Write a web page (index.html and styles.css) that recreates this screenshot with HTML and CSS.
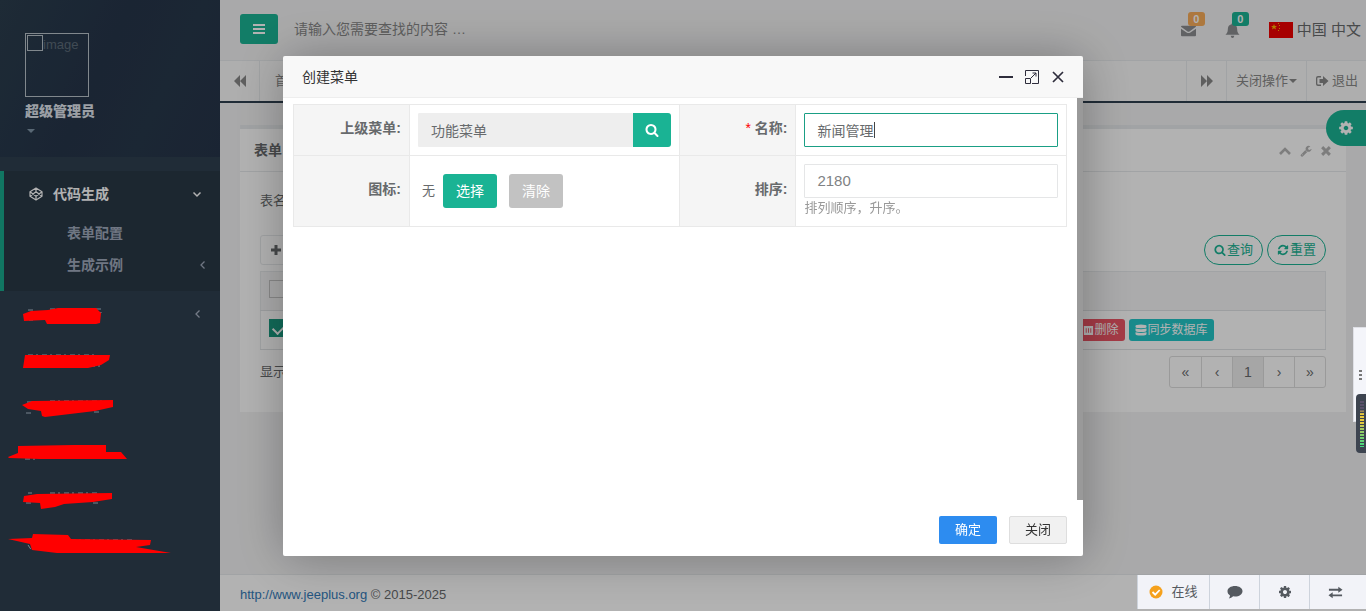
FILE: index.html
```html
<!DOCTYPE html>
<html lang="zh-CN">
<head>
<meta charset="utf-8">
<title>表单配置</title>
<link rel="stylesheet" href="styles.css">
</head>
<body>
<svg class="sprite" aria-hidden="true">
  <symbol id="search" viewBox="0 0 1792 1792"><path d="M1216 832q0-185-131.500-316.500t-316.500-131.500-316.500 131.500-131.500 316.500 131.500 316.500 316.500 131.500 316.500-131.500 131.500-316.500zm512 832q0 52-38 90t-90 38q-54 0-90-38l-343-342q-179 124-399 124-143 0-273.500-55.500t-225-150-150-225-55.500-273.500 55.500-273.500 150-225 225-150 273.500-55.500 273.500 55.500 225 150 150 225 55.500 273.500q0 220-124 399l343 343q37 37 37 90z"/></symbol>
  <symbol id="cog" viewBox="0 0 1792 1792"><path d="M1152 896q0-106-75-181t-181-75-181 75-75 181 75 181 181 75 181-75 75-181zm512-109v222q0 12-8 23t-20 13l-185 28q-19 54-39 91 35 50 107 138 10 12 10 25t-9 23q-27 37-99 108t-94 71q-12 0-26-9l-138-108q-44 23-91 38-16 136-29 186-7 28-36 28h-222q-14 0-24.500-8.500t-11.500-21.500l-28-184q-49-16-90-37l-141 107q-10 9-25 9-14 0-25-11-126-114-165-168-7-10-7-23 0-12 8-23 15-21 51-66.500t54-70.500q-27-50-41-99l-183-27q-13-2-21-12.500t-8-23.500v-222q0-12 8-23t19-13l186-28q14-46 39-92-40-57-107-138-10-12-10-24 0-10 9-23 26-36 98.500-107.500t94.500-71.500q13 0 26 10l138 107q44-23 91-38 16-136 29-186 7-28 36-28h222q14 0 24.500 8.500t11.500 21.500l28 184q49 16 90 37l142-107q9-9 24-9 13 0 25 10 129 119 165 170 7 8 7 22 0 12-8 23-15 21-51 66.500t-54 70.500q26 50 41 98l183 28q13 2 21 12.500t8 23.500z"/></symbol>
  <symbol id="refresh" viewBox="0 0 1792 1792"><path d="M1639 1056q0 5-1 7-64 268-268 434.500t-478 166.500q-146 0-282.500-55t-243.500-157l-129 129q-19 19-45 19t-45-19-19-45v-448q0-26 19-45t45-19h448q26 0 45 19t19 45-19 45l-137 137q71 66 161 102t187 36q134 0 250-65t186-179q11-17 53-117 8-23 30-23h192q13 0 22.500 9.500t9.500 22.500zm25-800v448q0 26-19 45t-45 19h-448q-26 0-45-19t-19-45 19-45l138-138q-148-137-349-137-134 0-250 65t-186 179q-11 17-53 117-8 23-30 23h-199q-13 0-22.500-9.500t-9.500-22.500v-7q65-268 270-434.500t480-166.500q146 0 284 55.500t245 156.500l130-129q19-19 45-19t45 19 19 45z"/></symbol>
  <symbol id="wrench" viewBox="0 0 1792 1792"><path d="M448 1472q0-26-19-45t-45-19-45 19-19 45 19 45 45 19 45-19 19-45zm644-420l-682 682q-37 37-90 37-52 0-91-37l-106-108q-38-36-38-90 0-53 38-91l681-681q39 98 114.500 173.500t173.500 114.500zm634-435q0 39-23 106-47 134-164.500 217.500t-258.500 83.500q-185 0-316.500-131.500t-131.500-316.500 131.500-316.500 316.500-131.500q58 0 121.500 16.500t107.500 46.500q16 11 16 28t-16 28l-293 169v224l193 107q5-3 79-48.500t135.500-81 70.500-35.500q15 0 23.500 10t8.500 25z"/></symbol>
  <symbol id="bars" viewBox="0 0 14 14"><path d="M1 2h12v2H1zM1 6h12v2H1zM1 10h12v2H1z"/></symbol>
  <symbol id="backward" viewBox="0 0 14 14"><path d="M7 1v12L1 7zM13 1v12L7 7z"/></symbol>
  <symbol id="forward" viewBox="0 0 14 14"><path d="M1 1v12l6-6zM7 1v12l6-6z"/></symbol>
  <symbol id="envelope" viewBox="0 0 16 16"><path d="M0 4q0-1 1-1h14q1 0 1 1L9 9q-1 .8-2 0zM0 6l6 4q2 1.500 4 0l6-4v7q0 1-1 1H1q-1 0-1-1z"/></symbol>
  <symbol id="bell" viewBox="0 0 16 16"><path d="M8 0q1 0 1 1.300C12 2 13 4 13 7c0 3 1 4 2.500 5.500H.5C2 11 3 10 3 7c0-3 1-5 4-5.700Q7 0 8 0zM6 13.500h4Q9.500 16 8 16T6 13.500z"/></symbol>
  <symbol id="signout" viewBox="0 0 14 14"><path d="M6 2H3Q1 2 1 4v6q0 2 2 2h3v-1.500H3q-.7 0-.7-.7V4.200q0-.7.7-.7h3zM8 2l5.500 5L8 12V9H4.500V5H8z"/></symbol>
  <symbol id="plus" viewBox="0 0 12 12"><path d="M4.500 1h3v3.500H11v3H7.500V11h-3V7.500H1v-3h3.500z"/></symbol>
  <symbol id="up" viewBox="0 0 14 14"><path d="M2 10l5-5 5 5" fill="none" stroke="currentColor" stroke-width="2.600"/></symbol>
  <symbol id="times" viewBox="0 0 14 14"><path d="M2.500 2.500l9 9M11.500 2.500l-9 9" fill="none" stroke="currentColor" stroke-width="3.400"/></symbol>
  <symbol id="left" viewBox="0 0 10 10"><path d="M6.500 1.500L3 5l3.500 3.500" fill="none" stroke="currentColor" stroke-width="1.300"/></symbol>
  <symbol id="down" viewBox="0 0 10 10"><path d="M1.500 3.500L5 7l3.500-3.500" fill="none" stroke="currentColor" stroke-width="1.500"/></symbol>
  <symbol id="codepen" viewBox="0 0 14 14"><path d="M7 1l6 3.800v4.400L7 13 1 9.200V4.800zM7 1v3.800M7 9.200V13M1 4.800l6 4.400 6-4.400M1 9.200l6-4.400 6 4.400" fill="none" stroke="currentColor" stroke-width="1.200" stroke-linejoin="round"/></symbol>
  <symbol id="trash" viewBox="0 0 12 12"><path d="M1 1h10v10H1zM3 3.500v5h1v-5zM5.500 3.500v5h1v-5zM8 3.500v5h1v-5z" fill-rule="evenodd"/></symbol>
  <symbol id="database" viewBox="0 0 12 12"><path d="M.5 2Q.5.500 6 .5T11.500 2v1Q11.500 4.200 6 4.200T.5 3zM.5 4.500q5.500 1.500 11 0v2Q11.500 8 6 8T.5 6.500zM.5 8.200q5.500 1.500 11 0V10q0 1.500-5.500 1.500T.5 10z"/></symbol>
  <symbol id="comment" viewBox="0 0 16 14"><path d="M8 1c4.200 0 7.500 2.200 7.500 5.200S12.200 11.500 8 11.500l-1.800-.2Q4.300 13 1.800 13.400q1.200-1.300 1.200-3C1.400 9.400.5 8 .5 6.200.500 3.200 3.800 1 8 1z"/></symbol>
  <symbol id="exchange" viewBox="0 0 16 14"><path d="M1 3h10V.8L15.500 4 11 7.200V5H1zM15 9H5V6.800L.5 10 5 13.200V11h10z"/></symbol>
</svg>

<div class="app">
  <nav class="sidebar">
    <div class="profile">
      <div class="avatar"><span class="broken"></span><span>image</span></div>
      <strong class="user">超级管理员</strong>
      <span class="caret"></span>
    </div>
    <div class="group">
      <a class="group-title" href="#"><svg class="icon14"><use href="#codepen"/></svg><span>代码生成</span><svg class="arrow"><use href="#down"/></svg></a>
      <a class="sub" href="#">表单配置</a>
      <a class="sub" href="#">生成示例<svg class="arrow"><use href="#left"/></svg></a>
    </div>
    <div class="masked">
      <a class="mask-row" href="#" aria-label="菜单一"><svg class="mark" viewBox="0 0 180 46"><path class="trace" d="M28 19h5M50 18h30M96 18h5v4h-5M29 29h4"/><path d="M23 23l8-3 17-1 10-2h38l5 5-1 10-4 1H47l-2-4-21 1z"/></svg><svg class="arrow"><use href="#left"/></svg></a>
      <a class="mask-row" href="#" aria-label="菜单二"><svg class="mark" viewBox="0 0 180 46"><path class="trace" d="M28 18h70M90 29h13"/><path d="M25 18h85l-1 5-8 5-13 3H23z"/></svg></a>
      <a class="mask-row" href="#" aria-label="菜单三"><svg class="mark" viewBox="0 0 180 46"><path class="trace" d="M27 19h6M50 18h53M26 30h8M94 29h8"/><path d="M22 22l10-4 81-1v7l-18 4-50 6-3-1-1-5-13-2z"/></svg></a>
      <a class="mask-row" href="#" aria-label="菜单四"><svg class="mark" viewBox="0 0 180 46"><path class="trace" d="M25 30h12M49 29h30"/><path d="M8 28l10-4V17l56-1h32v7h15l6 7H40l-31-1z"/></svg></a>
      <a class="mask-row" href="#" aria-label="菜单五"><svg class="mark" viewBox="0 0 180 46"><path class="trace" d="M28 18h4M50 18h50M26 28h5M93 28h7"/><path d="M24 21l13-2 75-1v6l-19 3-29 2-9 3-14 2-1-6-17-1z"/></svg></a>
      <a class="mask-row" href="#" aria-label="菜单六"><svg class="mark" viewBox="0 0 180 46"><path class="trace" d="M28 24l4 6M71 19h64"/><path d="M8 18l24-1 1-4 35 1 3 4 80 1-1 5-14 2 35 6H57l-25-3-2-6z"/></svg></a>
    </div>
  </nav>

  <div class="main">
    <header class="topbar">
      <button class="toggle" aria-label="切换菜单"><svg class="icon14"><use href="#bars"/></svg></button>
      <input class="finder" type="text" aria-label="查找" placeholder="请输入您需要查找的内容 …">
      <a class="notice" href="#" aria-label="邮件"><svg class="icon15"><use href="#envelope"/></svg><span class="badge amber">0</span></a>
      <a class="notice" href="#" aria-label="通知"><svg class="icon15"><use href="#bell"/></svg><span class="badge">0</span></a>
      <a class="lang" href="#"><svg class="flag" viewBox="0 0 24 16"><path fill="#f00000" d="M0 0h24v16H0z"/><path fill="#ffb000" d="M5 2l.8 2H8L6.300 5.300 7 7.500 5 6.200 3 7.500l.7-2.200L2 4h2.200zM9 1h1v1H9zM10 3h1v1h-1zM10 6h1v1h-1zM9 8h1v1H9z"/></svg>中国 中文</a>
    </header>
    <div class="tabs">
      <button class="tab-cell arrow-cell" aria-label="向左"><svg class="icon14"><use href="#backward"/></svg></button>
      <a class="home" href="#">首页</a>
      <button class="tab-cell arrow-cell" aria-label="向右"><svg class="icon14"><use href="#forward"/></svg></button>
      <button class="tab-cell close-cell">关闭操作<span class="caret"></span></button>
      <a class="tab-cell exit-cell" href="#"><svg class="icon14"><use href="#signout"/></svg>退出</a>
    </div>
    <main class="content">
      <section class="box">
        <div class="box-title"><h5>表单</h5>
          <div class="tools"><svg class="icon14"><use href="#up"/></svg><svg class="icon12"><use href="#wrench"/></svg><svg class="icon12"><use href="#times"/></svg></div>
        </div>
        <div class="box-body">
          <div class="filter">表名</div>
          <div class="toolbar">
            <button class="add" aria-label="新建"><svg class="icon12"><use href="#plus"/></svg></button>
            <div class="pills">
              <button class="pill"><svg class="icon12"><use href="#search"/></svg>查询</button>
              <button class="pill"><svg class="icon12"><use href="#refresh"/></svg>重置</button>
            </div>
          </div>
          <table class="grid">
            <thead><tr><th class="pick"><input type="checkbox" aria-label="全选"></th><th></th><th class="ops"></th></tr></thead>
            <tbody><tr><td class="pick"><input type="checkbox" checked aria-label="选择行"></td><td></td><td class="ops"><div class="op-list"><button class="op danger"><svg class="icon11"><use href="#trash"/></svg>删除</button><button class="op info"><svg class="icon12"><use href="#database"/></svg>同步数据库</button></div></td></tr></tbody>
          </table>
          <div class="pager-row"><span>显示</span>
            <div class="pager"><a href="#">«</a><a href="#">‹</a><a class="current" href="#">1</a><a href="#">›</a><a href="#">»</a></div>
          </div>
        </div>
      </section>
    </main>
    <footer class="footer"><a href="#">http://www.jeeplus.org</a> © 2015-2025</footer>
  </div>
</div>

<button class="theme" aria-label="主题设置"><svg class="icon16"><use href="#cog"/></svg></button>
<div class="shade"></div>

<div class="dialog" role="dialog" aria-labelledby="dialog-title">
  <div class="dialog-head"><span id="dialog-title">创建菜单</span>
    <div class="dialog-tools">
      <button aria-label="最小化"><svg class="icon14" viewBox="0 0 14 14"><path d="M0 7h14" stroke="#2e2d3c" stroke-width="2"/></svg></button>
      <button aria-label="最大化"><svg class="icon14" viewBox="0 0 14 14"><path d="M.5 6V.5h13v13H7M.5 8.500h5v5h-5zM6 8l5-5M7.500 3H11v3.500" fill="none" stroke="#2e2d3c"/></svg></button>
      <button aria-label="关闭"><svg class="icon14" viewBox="0 0 14 14"><path d="M2 2l10 10M12 2L2 12" stroke="#2e2d3c" stroke-width="1.700"/></svg></button>
    </div>
  </div>
  <div class="dialog-body">
    <div class="sheet">
      <table class="form">
        <tr>
          <th><label for="parent">上级菜单:</label></th>
          <td><div class="lookup"><input id="parent" class="field" type="text" value="功能菜单" readonly><button class="find" aria-label="查找上级菜单"><svg class="icon14"><use href="#search"/></svg></button></div></td>
          <th><label for="name"><span class="star">*</span> 名称:</label></th>
          <td><input id="name" class="field active" type="text" value="新闻管理"></td>
        </tr>
        <tr>
          <th>图标:</th>
          <td><div class="icon-pick"><span>无</span><button class="btn">选择</button><button class="btn plain">清除</button></div></td>
          <th><label for="sort">排序:</label></th>
          <td><input id="sort" class="field number" type="text" value="2180"><div class="help">排列顺序，升序。</div></td>
        </tr>
      </table>
    </div>
  </div>
  <div class="dialog-foot"><button class="ok">确定</button><button class="cancel">关闭</button></div>
</div>

<div class="side-tab"><i></i><i></i><i></i></div>
<div class="meter"><span></span></div>
<div class="chatbar">
  <button class="online"><svg class="icon14" viewBox="0 0 14 14"><circle cx="7" cy="7" r="6.500" fill="#f5a11c"/><path d="M3.500 7l2.700 2.700 4.500-4.700" fill="none" stroke="#fff" stroke-width="1.800"/></svg>在线</button>
  <button aria-label="消息"><svg class="icon16"><use href="#comment"/></svg></button>
  <button aria-label="设置"><svg class="icon14"><use href="#cog"/></svg></button>
  <button aria-label="切换"><svg class="icon15"><use href="#exchange"/></svg></button>
</div>
</body>
</html>
```

FILE: styles.css
```css
* { box-sizing: border-box; }
body {
  margin: 0;
  background: #2f4050;
  color: #676a6c;
  font: 13px/20px "Liberation Sans", "Noto Sans CJK SC", sans-serif;
}
a { color: inherit; text-decoration: none; }
button, input { font: inherit; color: inherit; margin: 0; }
button { border: 0; padding: 0; background: none; white-space: nowrap; }
svg { fill: currentColor; flex: none; }
.sprite { position: absolute; width: 0; height: 0; }
.icon11 { width: 11px; height: 11px; }
.icon12 { width: 12px; height: 12px; }
.icon14 { width: 14px; height: 14px; }
.icon15 { width: 15px; height: 15px; }
.icon16 { width: 16px; height: 16px; }
.caret { display: inline-block; border: 4px solid transparent; border-top-color: currentColor; border-bottom: 0; }

.app { display: flex; min-height: 100vh; }

/* sidebar */
.sidebar { width: 220px; flex: none; background: #2f4050; color: #a7b1c2; font-size: 14px; font-weight: bold; }
.profile {
  display: flex; flex-direction: column; align-items: flex-start;
  height: 157px; padding: 33px 25px 0; margin-bottom: 14px;
  background: linear-gradient(115deg, #2b3e4e, #26354a 45%, #28384b 70%, #26344a);
  color: #dfe4ed;
}
.avatar { display: flex; width: 64px; height: 64px; padding: 1px; border: 1px solid #b9c3cb; font-size: 13px; font-weight: normal; color: #5d6c79; }
.broken { width: 16px; height: 16px; border: 1px solid #b9c3cb; }
.user { margin-top: 4px; }
.profile .caret { margin-top: 8px; margin-left: 2px; color: #8095a8; }
.group { border-left: 4px solid #19aa8d; background: #293846; padding-bottom: 10px; }
.group-title, .sub { display: flex; align-items: center; padding-right: 18px; }
.group-title { height: 46px; padding-left: 25px; gap: 10px; color: #fff; }
.sub { height: 32px; padding-left: 63px; padding-right: 12px; color: #a0aabc; }
.arrow { width: 10px; height: 10px; margin-left: auto; }
.mask-row { display: flex; align-items: center; height: 46px; padding-right: 17px; }
.mark { width: 180px; height: 46px; fill: #f00; position: relative; z-index: 20; }
.trace { fill: none; stroke: #78838f; stroke-width: 1; stroke-dasharray: 5 3 2 4; }

/* main column */
.main { flex: 1; min-width: 0; display: flex; flex-direction: column; background: #f3f3f4; }
.topbar { display: flex; align-items: center; height: 61px; padding: 0 5px 2px 20px; border-bottom: 1px solid #e7eaec; }
.toggle { display: grid; place-items: center; width: 38px; height: 30px; border-radius: 3px; background: #1ab394; color: #fff; }
.finder { flex: 1; min-width: 0; height: 34px; padding: 0 16px; border: 0; background: none; font-size: 14px; }
.finder::placeholder { color: #888; opacity: 1; }
.notice { position: relative; display: flex; width: 15px; margin-right: 29px; padding-top: 3px; color: #8b8d90; }
.badge { position: absolute; left: 7px; top: -8px; width: 17px; height: 14px; border-radius: 3px; background: #1ab394; color: #fff; font-size: 11px; font-weight: bold; line-height: 14px; text-align: center; }
.amber { background: #f8ac59; }
.lang { display: flex; align-items: center; gap: 4px; padding-top: 2px; font-size: 15px; white-space: nowrap; }
.flag { width: 24px; height: 16px; }
.tabs { display: flex; height: 42px; background: #fafafa; border-bottom: 2px solid #2f4050; color: #888; }
.tab-cell { display: flex; align-items: center; justify-content: center; border-left: 1px solid #e7eaec; }
.tab-cell:first-child { border-left: 0; border-right: 1px solid #e7eaec; }
.arrow-cell { width: 40px; }
.close-cell { width: 80px; gap: 1px; }
.exit-cell { width: 60px; gap: 3px; }
.home { flex: 1; padding: 10px 15px; }

.content { flex: 1; padding: 22px 20px; }
.box { background: #fff; border-top: 4px solid #e7eaec; }
.box-title { display: flex; justify-content: space-between; align-items: center; height: 43px; padding: 0 14px; border-bottom: 1px solid #e7eaec; }
.box-title h5 { margin: 0; font-size: 14px; line-height: 20px; }
.tools { display: flex; gap: 8px; align-items: center; padding-top: 2px; color: #b4b4b4; }
.box-body { padding: 19px 20px 24px; }
.filter { height: 44px; }
.toolbar { display: flex; justify-content: space-between; }
.add { width: 54px; height: 30px; border: 1px solid #e7eaec; border-radius: 3px; padding: 3px 9px 0; text-align: left; }
.pills { display: flex; gap: 4px; }
.pill { display: flex; align-items: center; justify-content: center; gap: 1px; width: 59px; height: 30px; border: 1px solid #1ab394; border-radius: 15px; color: #1ab394; }
.grid { width: 100%; margin: 6px 0; border-collapse: collapse; table-layout: fixed; border: 1px solid #e7eaec; }
.grid th { background: #f5f5f6; }
.grid th, .grid td { height: 39px; padding: 0 8px; border-bottom: 1px solid #e0e3e5; }
.grid .pick { width: 36px; padding-bottom: 4px; }
.grid .ops { width: 257px; }
.pick input { display: block; appearance: none; width: 18px; height: 18px; margin: 0; border: 1px solid #c4c4c4; }
.pick input:checked { border: 0; background: #1a9a80; }
.pick input:checked::after { content: ""; display: block; width: 10px; height: 6px; margin: 4px; border: solid #fff; border-width: 0 0 2px 2px; transform: rotate(-45deg); }
.pick input:checked { padding-top: 1px; overflow: hidden; }
.op-list { display: flex; gap: 4px; }
.op { display: flex; align-items: center; gap: 1px; height: 22px; padding: 0 6px; border-radius: 3px; color: #fff; font-size: 12px; }
.danger { background: #ed5565; }
.info { background: #23c6c8; }
.pager-row { display: flex; justify-content: space-between; align-items: center; }
.pager { display: flex; border: 1px solid #ddd; border-radius: 3px; }
.pager a { width: 31px; height: 30px; font-size: 14px; line-height: 30px; text-align: center; border-left: 1px solid #ddd; }
.pager a:first-child { border-left: 0; }
.pager .current { background: #eee; }
.footer { height: 37px; padding: 10px 20px; background: #fff; border-top: 1px solid #e7eaec; }
.footer a { color: #337ab7; }

/* layers above the page */
.theme { position: fixed; right: 0; top: 110px; display: flex; align-items: center; width: 40px; height: 36px; padding-left: 12px; border-radius: 20px 0 0 20px; background: #1ab394; color: #fff; }
.shade { position: fixed; inset: 0; z-index: 10; background: rgba(0, 0, 0, .3); pointer-events: none; }
.dialog {
  position: fixed; z-index: 30; left: 50%; top: 50%; transform: translate(-50%, -50%);
  display: flex; flex-direction: column; width: 800px; height: 500px;
  border-radius: 2px; box-shadow: 1px 1px 50px rgba(0, 0, 0, .3);
}
.dialog-head { display: flex; justify-content: space-between; align-items: center; height: 42px; padding: 2px 18px 0 19px; background: #f8f8f8; border-bottom: 1px solid #eee; border-radius: 2px 2px 0 0; color: #333; font-size: 14px; }
.dialog-tools { display: flex; gap: 12px; }
.dialog-tools button { display: flex; }
.dialog-body { flex: 1; padding-right: 6px; background: #999; }
.sheet { height: 100%; padding: 6px 10px; background: #fff; }
.form { width: 100%; border-collapse: collapse; table-layout: fixed; }
.form th, .form td { padding: 8px; border: 1px solid #e9e9e9; }
.form th { width: 15%; padding-bottom: 12px; background: #f5f5f5; text-align: right; font-size: 14px; }
.form td { width: 35%; }
.star { color: #f00; font-weight: normal; }
.field { display: block; width: 100%; height: 34px; padding: 0 12px; border: 1px solid #e5e6e7; border-radius: 1px; background: #fff; outline: 0; font-size: 14px; }
.field.active { border-color: #1a9f85; background: linear-gradient(#444, #444) 69px center / 1px 16px no-repeat #fff; }
.field.number { color: #808284; font-size: 15px; }
.lookup { display: flex; }
.lookup .field { flex: 1; min-width: 0; border-color: #eee; background: #eee; }
.find { display: grid; place-items: center; width: 38px; height: 34px; border-radius: 0 3px 3px 0; background: #1ab394; color: #fff; }
.icon-pick { display: flex; align-items: center; padding-left: 4px; }
.icon-pick span { margin-right: 8px; }
.btn { width: 54px; height: 34px; margin-right: 12px; border-radius: 3px; background: #1ab394; color: #fff; font-size: 14px; }
.plain { background: #c2c2c2; }
.help { color: #999; }
.dialog-foot { display: flex; justify-content: flex-end; gap: 12px; height: 56px; padding: 16px 16px 12px; background: #fff; border-radius: 0 0 2px 2px; }
.ok, .cancel { width: 58px; padding-top: 1px; border-radius: 2px; }
.ok { background: #2d8cf0; color: #fff; }
.cancel { background: #f1f1f1; border: 1px solid #dedede; color: #333; }

.side-tab { position: fixed; z-index: 40; right: 0; top: 327px; display: flex; flex-direction: column; justify-content: center; align-items: center; gap: 2px; width: 13px; height: 95px; background: #f4f5fa; border: 1px solid #dfe0e6; border-right: 0; }
.side-tab i { width: 3px; height: 2px; background: #777; }
.meter { position: fixed; z-index: 41; right: 0; top: 394px; width: 10px; height: 59px; padding: 6px 2px 6px 4px; border-radius: 4px 0 0 4px; background: #3d4450; }
.meter span { display: block; height: 100%; background: repeating-linear-gradient(#3d4450 0 1px, transparent 1px 3px), linear-gradient(#59506a 0 20%, #e8c93c 30% 48%, #a8c860 60%, #40d880); }
.chatbar { position: fixed; z-index: 40; right: 0; bottom: 2px; display: flex; height: 34px; background: #f2f3f8; color: #555a60; }
.chatbar button { display: flex; align-items: center; justify-content: center; width: 50px; border-left: 1px solid #cdd3dc; }
.chatbar .online { width: 72px; gap: 8px; }
.chatbar button:last-child { width: 57px; padding-right: 6px; }
```
